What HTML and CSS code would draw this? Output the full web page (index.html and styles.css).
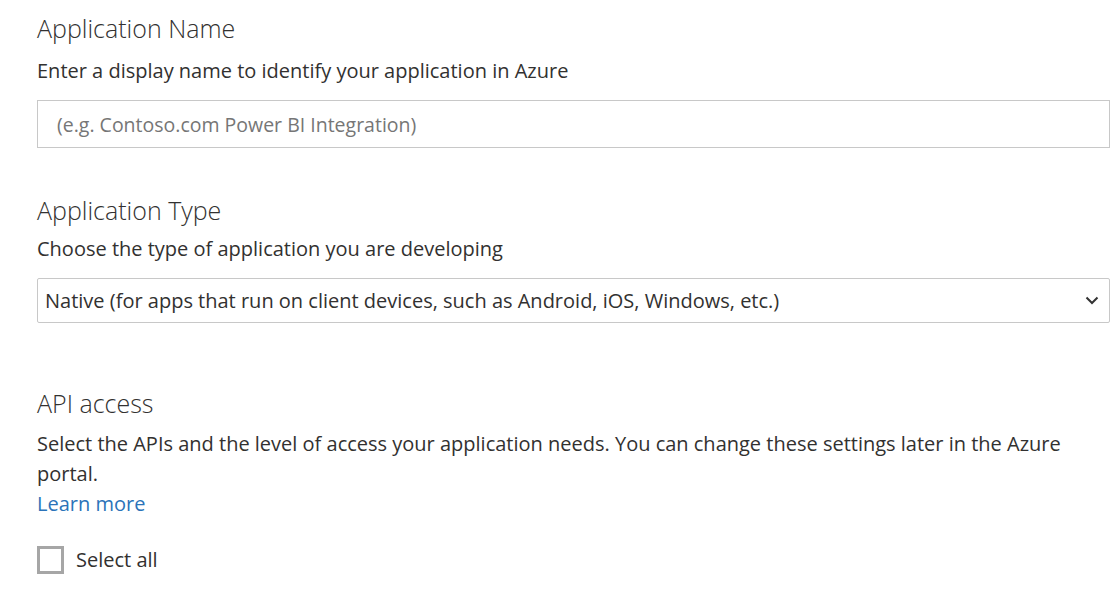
FILE: index.html
```html
<!DOCTYPE html>
<html>
<head>
<meta charset="utf-8">
<link rel="stylesheet" href="styles.css">
</head>
<body>
<main class="form">
  <section class="section name-section">
    <h2 class="title">Application Name</h2>
    <p class="desc">Enter a display name to identify your application in Azure</p>
    <input class="text-input" type="text" placeholder="(e.g. Contoso.com Power BI Integration)">
  </section>
  <section class="section type-section">
    <h2 class="title">Application Type</h2>
    <p class="desc">Choose the type of application you are developing</p>
    <div class="select">
      <span class="select-value">Native (for apps that run on client devices, such as Android, iOS, Windows, etc.)</span>
      <svg class="chevron" width="14" height="9" viewBox="0 0 14 9"><path d="M1.5 1.5 L7 7 L12.5 1.5" fill="none" stroke="#333" stroke-width="2"/></svg>
    </div>
  </section>
  <section class="section api-section">
    <h2 class="title">API access</h2>
    <p class="desc">Select the APIs and the level of access your application needs. You can change these settings later in the Azure portal.</p>
    <a class="link" href="#">Learn more</a>
    <label class="check">
      <span class="box"></span>
      <span class="check-label">Select all</span>
    </label>
  </section>
</main>
</body>
</html>
```
FILE: styles.css
```css
html, body {
  margin: 0;
  padding: 0;
  background: #fff;
}
body {
  font-family: "Open Sans", "Noto Sans", sans-serif;
  color: #323130;
}
.form {
  display: flex;
  flex-direction: column;
  padding: 12px 2px 0 37px;
}
.section {
  display: flex;
  flex-direction: column;
}
.title {
  margin: 0;
  font-size: 25px;
  font-weight: 300;
  line-height: 32px;
  color: #323130;
}
.desc {
  margin: 12px 0 0 0;
  font-size: 20px;
  line-height: 30px;
  color: #323130;
}
.text-input {
  margin-top: 14px;
  height: 48px;
  box-sizing: border-box;
  border: 1px solid #c8c8c8;
  padding: 0 19px;
  font-family: inherit;
  font-size: 19.5px;
  color: #323130;
  outline: none;
}
.text-input::placeholder {
  color: #767676;
}
.type-section {
  margin-top: 46px;
}
.type-section .desc {
  margin-top: 8px;
}
.select {
  margin-top: 14px;
  height: 45px;
  box-sizing: border-box;
  border: 1px solid #c8c8c8;
  border-radius: 2px;
  display: flex;
  align-items: center;
  justify-content: space-between;
  padding: 0 10px 0 7px;
  font-size: 20px;
}
.api-section {
  margin-top: 64px;
}
.api-section .desc {
  margin-top: 10px;
}
.link {
  font-size: 20px;
  line-height: 30px;
  color: #2b73b9;
  text-decoration: none;
  align-self: flex-start;
}
.check {
  margin-top: 26px;
  display: flex;
  align-items: center;
  gap: 12px;
}
.box {
  width: 27px;
  height: 28px;
  box-sizing: border-box;
  border: 3px solid #a6a6a6;
}
.check-label {
  font-size: 20px;
  line-height: 30px;
}
```
